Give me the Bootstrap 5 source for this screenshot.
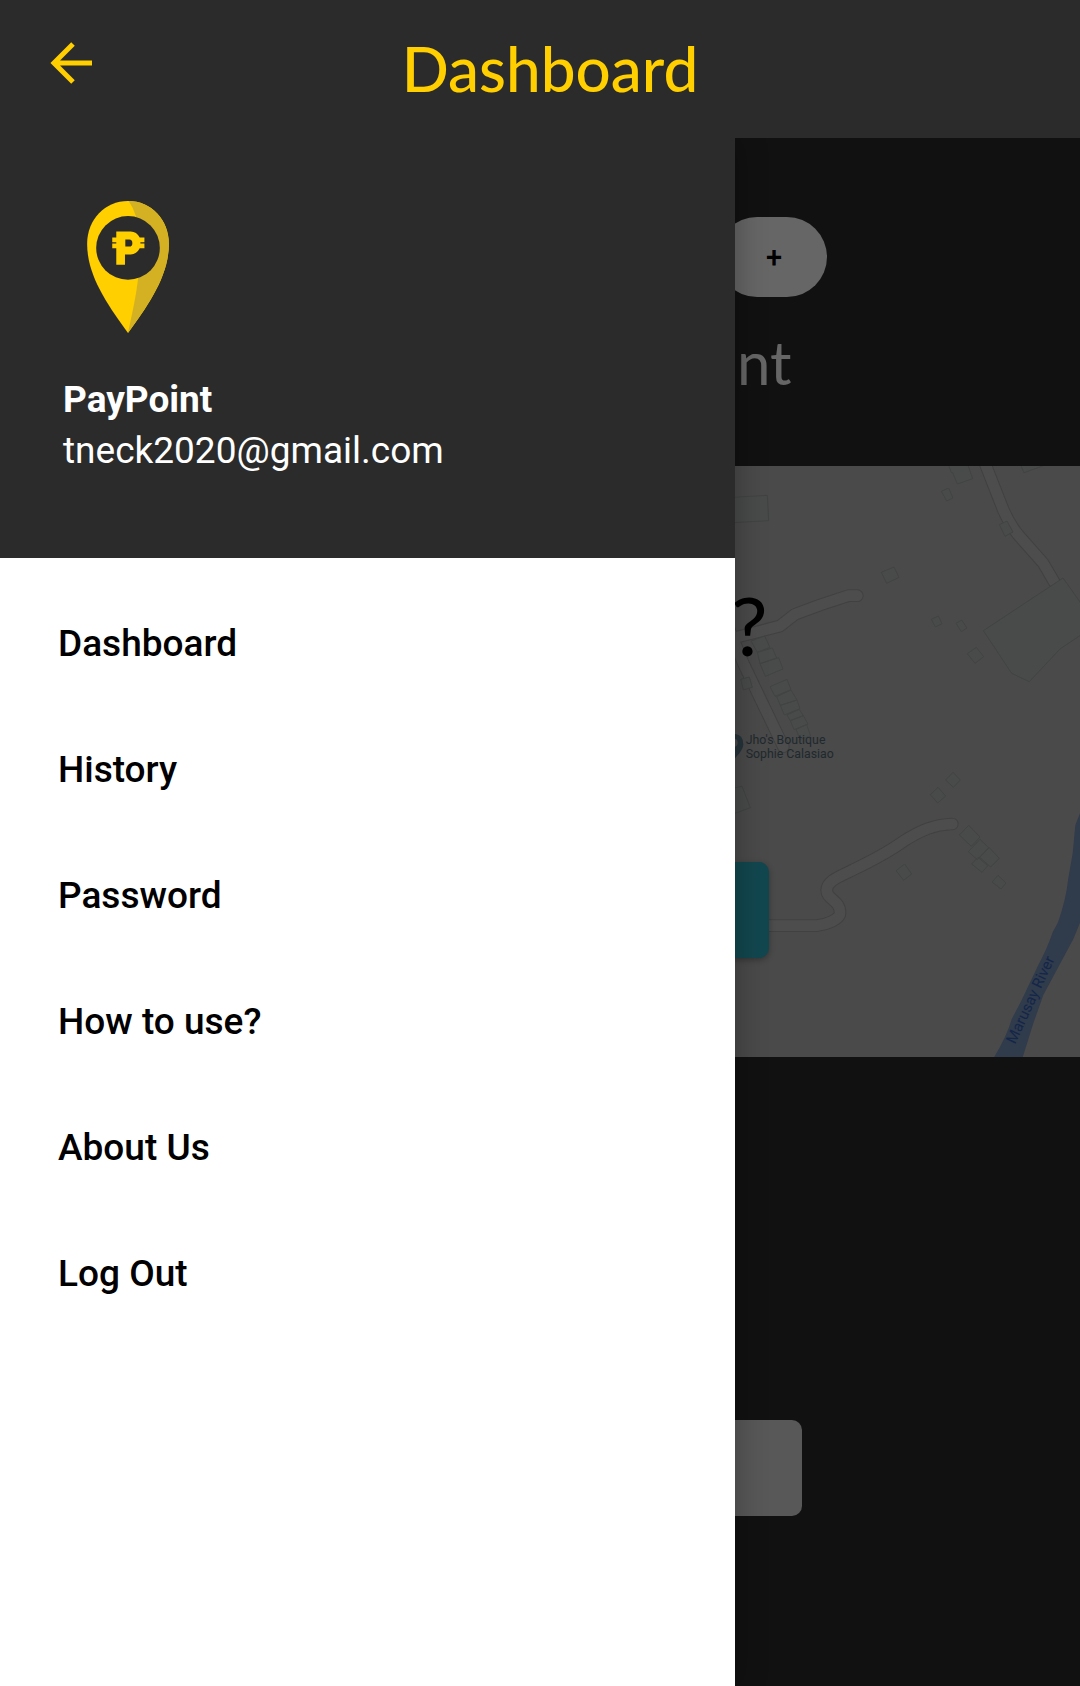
<!DOCTYPE html>
<html lang="en">
<head>
<meta charset="utf-8">
<meta name="viewport" content="width=device-width, initial-scale=1">
<title>Dashboard</title>
<link rel="stylesheet" href="https://cdn.jsdelivr.net/npm/bootstrap@5.3.0/dist/css/bootstrap.min.css">
<style>
  :root { --ink: #2b2b2b; --gold: #ffcf00; --night: #111; }
  body { font-family: Roboto, "Noto Sans", sans-serif; background: var(--night); }
  .app-bar { background: var(--ink); height: 138px; padding: 0 44px 2px; }
  .back-btn { width: 54px; height: 54px; margin-bottom: 12px; }
  .back-btn svg { width: 54px; height: 54px; }
  .app-title { font-family: Lato, sans-serif; font-size: 62px; line-height: 74px; font-weight: 500; color: var(--gold); padding-left: 20px; }
  .bar-end { width: 54px; }
  .drawer { flex: 49 0 0; z-index: 2; box-shadow: 0 0 30px rgba(0,0,0,.3); }
  .profile { background: var(--ink); height: 420px; padding: 63px 63px 0; font-size: 37px; line-height: 51px; }
  .pin { width: 82px; height: 132px; margin: 0 0 41px 24px; }
  .drawer-nav { padding: 23px 0; }
  .drawer-nav .nav-link { color: #000; font-size: 37px; line-height: 54px; font-weight: 500; padding: 36px 58px; }
  .pane { flex: 23 0 0; min-width: 0; }
  .top-up { padding: 79px 0 0; height: 328px; }
  .pill-btn { width: 110px; height: 80px; margin-left: -18px; border-radius: 40px; background: #666; color: #000; font-size: 29px; line-height: 80px; font-weight: 500; padding: 0 0 0 4px; }
  .pane-title { font-family: Lato, sans-serif; font-weight: 400; font-size: 60px; line-height: 74px; color: #666; margin: 28px 0 0 2px; }
  .map-area { height: 591px; padding-top: 108px; }
  .map-art { width: 100%; height: 100%; }
  .question { font-family: Lato, sans-serif; font-weight: 400; font-size: 82px; line-height: 100px; color: #000; margin: 0 0 188px -4px; }
  .teal-btn { width: 50px; height: 96px; margin-left: -16px; background: #12474f; border-radius: 10px; box-shadow: 0 2px 6px rgba(0,0,0,.3); }
  .footer-area { min-height: 629px; padding-top: 363px; }
  .grey-btn { width: 84px; height: 96px; margin-left: -17px; background: #585858; border-radius: 10px; }
</style>
</head>
<body>
<div class="d-flex flex-column min-vh-100">
  <header class="app-bar d-flex align-items-center justify-content-between">
    <button type="button" class="back-btn btn p-0 border-0" aria-label="Back">
      <svg class="d-block" viewBox="0 0 54 54" aria-hidden="true"><path d="M29 9 10 28 29 47M11 28H48" fill="none" stroke="#ffcf00" stroke-width="5"/></svg>
    </button>
    <h1 class="app-title m-0">Dashboard</h1>
    <span class="bar-end"></span>
  </header>
  <div class="d-flex flex-grow-1 overflow-hidden">
    <aside class="drawer bg-white position-relative">
      <div class="profile text-white">
        <svg class="pin d-block" viewBox="144 62 244 394" aria-hidden="true">
          <path fill="#ffcf00" d="M266 62C198 62 144 117 144 190C144 285 205 372 266 456C327 372 388 285 388 190C388 117 334 62 266 62Z"/>
          <path fill="#d4b123" d="M268 62C334 62 388 117 388 190C388 285 327 372 266 456C277 404 290 350 297 285L290 108Q282 82 268 62Z"/>
          <circle cx="266" cy="202" r="95" fill="#2b2b2b"/>
          <path fill="#ffcf00" fill-rule="evenodd" d="M231 153H274Q292 153 301 171H315V185H303V189H315V203H301Q292 221 274 222H257V252H231V203H219V189H231V185H219V171H231ZM258 177V198H270Q279 198 279 188Q279 177 270 177Z"/>
        </svg>
        <div class="fw-bold">PayPoint</div>
        <div>tneck2020@gmail.com</div>
      </div>
      <nav class="drawer-nav nav flex-column">
        <a class="nav-link" href="#">Dashboard</a>
        <a class="nav-link" href="#">History</a>
        <a class="nav-link" href="#">Password</a>
        <a class="nav-link" href="#">How to use?</a>
        <a class="nav-link" href="#">About Us</a>
        <a class="nav-link" href="#">Log Out</a>
      </nav>
    </aside>
    <main class="pane d-flex flex-column">
      <section class="top-up">
        <button type="button" class="pill-btn btn d-block border-0">+</button>
        <h2 class="pane-title">nt</h2>
      </section>
      <section class="map-area position-relative">
        <svg class="map-art position-absolute top-0 start-0" viewBox="45 48 1035 1773" preserveAspectRatio="xMinYMin slice" aria-hidden="true">
          <path fill="#4a4a4a" d="M0 0H1400V1900H0Z"/>
          <!-- roads: dark casing, then lighter surface -->
          <g fill="none" stroke-linejoin="round" stroke-linecap="round">
            <g stroke="#414141" stroke-width="38">
              <path d="M795 40L850 180Q870 225 895 255L970 340L1005 400"/>
              <path d="M45 563L180 528L225 493L300 465L385 437H412"/>
              <path d="M20 520L70 640L190 890"/>
              <path d="M120 1427H290C320 1424 360 1408 360 1390C362 1350 320 1350 320 1320C322 1290 360 1280 400 1259C460 1230 500 1210 550 1174C600 1142 640 1124 697 1122"/>
            </g>
            <g stroke="#4d4d4d" stroke-width="32">
              <path d="M795 40L850 180Q870 225 895 255L970 340L1005 400"/>
              <path d="M45 563L180 528L225 493L300 465L385 437H412"/>
              <path d="M20 520L70 640L190 890"/>
              <path d="M120 1427H290C320 1424 360 1408 360 1390C362 1350 320 1350 320 1320C322 1290 360 1280 400 1259C460 1230 500 1210 550 1174C600 1142 640 1124 697 1122"/>
            </g>
          </g>
          <!-- buildings -->
          <g fill="#484b49" stroke="#414442" stroke-width="3">
            <path d="M40 142L142 136L146 212L40 218ZM684 40L694 68H698L712 102L758 86L742 40ZM900 40L912 68L990 40ZM664 124L686 114L699 144L680 153ZM838 224L861 213L879 246L855 259ZM484 367L522 351L537 382L500 400ZM634 508L655 498L666 521L646 531ZM708 520L725 510L741 534L724 545ZM742 611L769 592L791 620L765 640ZM790 542L1029 384L1090 470V550L1020 597L928 695L875 670Z"/>
            <path d="M93 573L134 558L150 592L112 607ZM112 607L157 594L170 624L120 641ZM120 641L176 623L189 657L136 679ZM62 688L88 681L97 712L70 720ZM150 710L201 688L213 719L165 739ZM170 740L213 720L231 750L181 766ZM181 766L231 750L240 776L193 795ZM201 795L238 778L250 797L211 812ZM211 812L250 797L264 822L222 839ZM228 838L260 824L272 858L240 868Z"/>
            <path d="M40 1014L66 1009L91 1073L40 1092ZM677 990L699 967L721 990L700 1012ZM631 1034L654 1012L677 1038L653 1059ZM528 1262L554 1242L575 1272L551 1291ZM718 1155L746 1126L780 1161L754 1189ZM745 1205L780 1168L806 1193L772 1229ZM779 1222L808 1193L838 1225L812 1251ZM755 1242L774 1222L803 1247L786 1267ZM816 1296L834 1276L858 1299L843 1317Z"/>
          </g>
          <path fill="#303b4b" d="M1100 1040L1080 1090L1066 1125L1058 1210L1045 1285Q1038 1350 1014 1417L998 1447Q980 1500 955 1545L905 1650L875 1708Q860 1760 822 1822H908L940 1720L970 1635L1060 1467L1100 1370Z"/>
          <path fill="#26343a" fill-rule="evenodd" d="M41 852Q70 852 70 884Q68 902 40 930V852ZM41 866A12 12 0 0 0 41 890A12 12 0 0 0 41 866Z"/>
          <g font-family="Roboto, sans-serif" fill="#20292d" font-size="37">
            <text x="77" y="882">Jho's Boutique</text>
            <text x="77" y="925">Sophie Calasiao</text>
            <text transform="translate(885 1784) rotate(-65)" fill="#14264a" font-size="45">Marusay River</text>
          </g>
        </svg>
        <div class="position-relative">
          <h2 class="question">?</h2>
          <button type="button" class="teal-btn btn d-block border-0 p-0" aria-label="Confirm"></button>
        </div>
      </section>
      <section class="footer-area flex-grow-1">
        <button type="button" class="grey-btn btn d-block border-0 p-0" aria-label="Continue"></button>
      </section>
    </main>
  </div>
</div>
<script src="https://cdn.jsdelivr.net/npm/bootstrap@5.3.0/dist/js/bootstrap.bundle.min.js"></script>
</body>
</html>
